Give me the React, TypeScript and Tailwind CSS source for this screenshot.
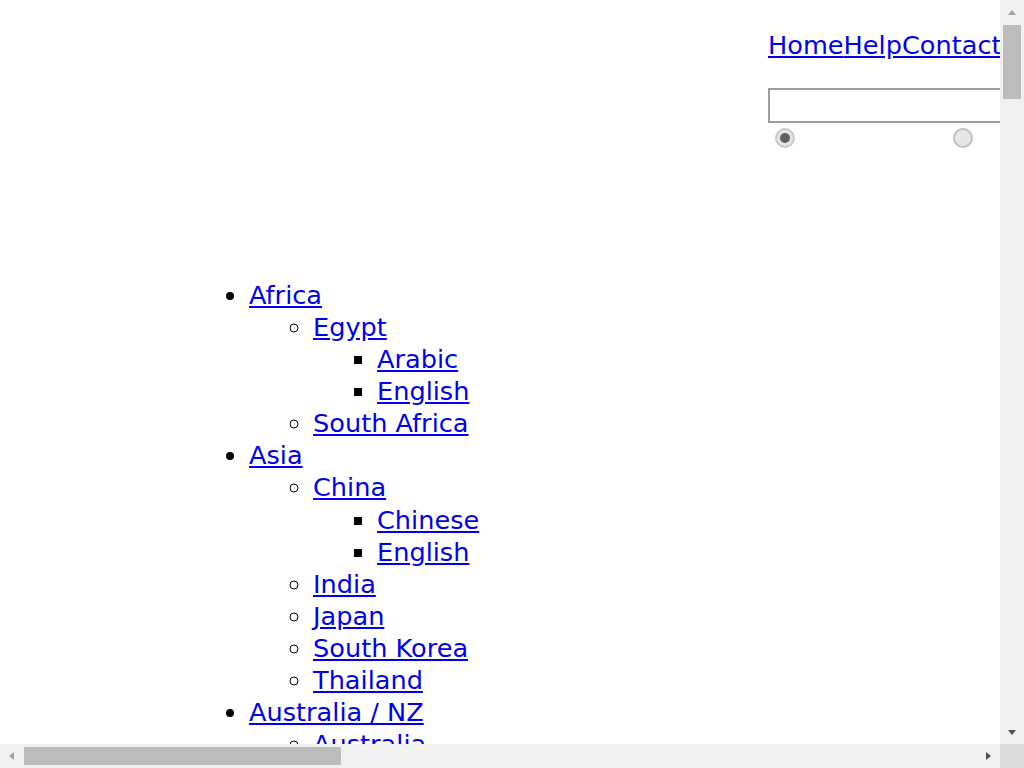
const regions = [
  {
    name: 'Africa',
    countries: [
      { name: 'Egypt', langs: ['Arabic', 'English'] },
      { name: 'South Africa', langs: [] },
    ],
  },
  {
    name: 'Asia',
    countries: [
      { name: 'China', langs: ['Chinese', 'English'] },
      { name: 'India', langs: [] },
      { name: 'Japan', langs: [] },
      { name: 'South Korea', langs: [] },
      { name: 'Thailand', langs: [] },
    ],
  },
  {
    name: 'Australia / NZ',
    countries: [
      { name: 'Australia', langs: [] },
      { name: 'New Zealand', langs: [] },
    ],
  },
]

const link = 'text-[#0000ee] underline'

function ScrollArrow({ dir }: { dir: 'up' | 'down' | 'left' | 'right' }) {
  const pts = {
    up: '1,7 5,2 9,7',
    down: '1,3 5,8 9,3',
    left: '7,1 2,5 7,9',
    right: '3,1 8,5 3,9',
  }[dir]
  const dark = dir === 'down' || dir === 'right'
  return (
    <svg width="10" height="10" viewBox="0 0 10 10" className="shrink-0">
      <polygon points={pts} fill={dark ? '#505050' : '#a3a3a3'} />
    </svg>
  )
}

export default function App() {
  return (
    <div className="grid h-[768px] w-[1024px] grid-cols-[1000px_24px] grid-rows-[744px_24px] overflow-hidden bg-white">
      {/* page content */}
      <div className="overflow-hidden">
        <div className="w-[3060px] font-['DejaVu_Sans',sans-serif] text-[25.6px] leading-[32.08px] text-black">
          <header className="h-[279px] pl-[768px] pt-[29px]">
            <nav className="flex">
              <a href="#" className={link}>Home</a>
              <a href="#" className={link}>Help</a>
              <a href="#" className={link}>Contact</a>
            </nav>
            <form className="mt-[27px]">
              <div className="h-[35px] w-[380px] border-2 border-[#9c9c9c] bg-white" />
              <div className="flex pt-[5px]">
                <span className="ml-[7px] flex h-[20px] w-[20px] items-center justify-center rounded-full border-2 border-[#c8c8c8] bg-[#e4e4e4]">
                  <span className="h-[10px] w-[10px] rounded-full bg-[#606060]" />
                </span>
                <span className="ml-[158px] h-[20px] w-[20px] rounded-full border-2 border-[#c0c0c0] bg-[#e6e6e6]" />
              </div>
            </form>
          </header>

          <ul className="list-disc pl-[249px]">
            {regions.map((r) => (
              <li key={r.name}>
                <a href="#" className={link}>{r.name}</a>
                <ul className="list-[circle] pl-16">
                  {r.countries.map((c) => (
                    <li key={c.name}>
                      <a href="#" className={link}>{c.name}</a>
                      {c.langs.length > 0 && (
                        <ul className="list-[square] pl-16">
                          {c.langs.map((l) => (
                            <li key={l}>
                              <a href="#" className={link}>{l}</a>
                            </li>
                          ))}
                        </ul>
                      )}
                    </li>
                  ))}
                </ul>
              </li>
            ))}
          </ul>
        </div>
      </div>

      {/* vertical scrollbar */}
      <div className="flex flex-col items-center bg-[#f1f1f1]">
        <div className="flex h-[25px] items-center justify-center">
          <ScrollArrow dir="up" />
        </div>
        <div className="h-[74px] w-[18px] bg-[#bdbdbd]" />
        <div className="flex-1" />
        <div className="flex h-[24px] items-center justify-center">
          <ScrollArrow dir="down" />
        </div>
      </div>

      {/* horizontal scrollbar */}
      <div className="flex items-center bg-[#f1f1f1]">
        <div className="flex w-[24px] items-center justify-center">
          <ScrollArrow dir="left" />
        </div>
        <div className="h-[18px] w-[317px] bg-[#bdbdbd]" />
        <div className="flex-1" />
        <div className="flex w-[24px] items-center justify-center">
          <ScrollArrow dir="right" />
        </div>
      </div>

      {/* corner */}
      <div className="bg-[#dcdcdc]" />
    </div>
  )
}
